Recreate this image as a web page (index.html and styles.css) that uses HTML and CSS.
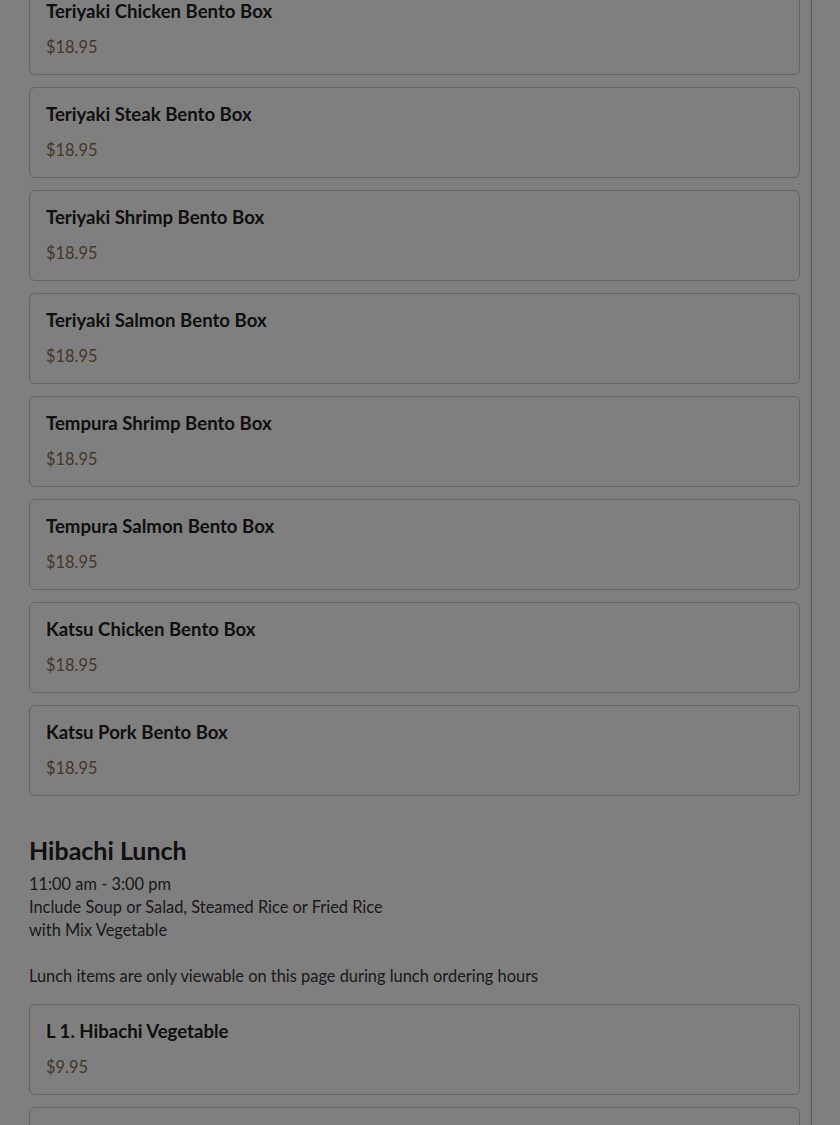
FILE: index.html
```html
<!DOCTYPE html>
<html lang="en">
<head>
<meta charset="utf-8">
<title>Menu</title>
<link rel="stylesheet" href="styles.css">
</head>
<body>
<div class="page">
  <main class="main">
    <section class="list first">
      <div class="card"><div class="name">Teriyaki Chicken Bento Box</div><div class="price">$18.95</div></div>
      <div class="card"><div class="name">Teriyaki Steak Bento Box</div><div class="price">$18.95</div></div>
      <div class="card"><div class="name">Teriyaki Shrimp Bento Box</div><div class="price">$18.95</div></div>
      <div class="card"><div class="name">Teriyaki Salmon Bento Box</div><div class="price">$18.95</div></div>
      <div class="card"><div class="name">Tempura Shrimp Bento Box</div><div class="price">$18.95</div></div>
      <div class="card"><div class="name">Tempura Salmon Bento Box</div><div class="price">$18.95</div></div>
      <div class="card"><div class="name">Katsu Chicken Bento Box</div><div class="price">$18.95</div></div>
      <div class="card"><div class="name">Katsu Pork Bento Box</div><div class="price">$18.95</div></div>
    </section>
    <section class="category">
      <h2 class="cat-title">Hibachi Lunch</h2>
      <div class="cat-desc">
        <p>11:00 am - 3:00 pm<br>Include Soup or Salad, Steamed Rice or Fried Rice<br>with Mix Vegetable</p>
        <p>Lunch items are only viewable on this page during lunch ordering hours</p>
      </div>
      <div class="list">
        <div class="card"><div class="name">L 1. Hibachi Vegetable</div><div class="price">$9.95</div></div>
        <div class="card"><div class="name">L 2. Hibachi Chicken</div><div class="price">$10.95</div></div>
      </div>
    </section>
  </main>
  <div class="rail"></div>
</div>
<div class="backdrop"></div>
</body>
</html>
```

FILE: styles.css
```css
html, body {
  margin: 0;
  padding: 0;
  background: #ffffff;
  font-family: "Lato", "Open Sans", "Liberation Sans", sans-serif;
  color: #222222;
  overflow: hidden;
}

.page {
  display: flex;
  min-height: 1125px;
}

.main {
  flex: 1;
  padding: 0 11px 0 29px;
}

.rail {
  width: 28px;
  border-left: 1px solid #b0b0b0;
  background: #ffffff;
}

.list {
  display: flex;
  flex-direction: column;
  gap: 12px;
}

.list.first {
  margin-top: -16px;
}

.card {
  border: 1px solid #c8c8c8;
  border-radius: 6px;
  padding: 16px 16px 18px;
  background: #ffffff;
}

.name {
  font-size: 18.6px;
  font-weight: 700;
  line-height: 20px;
  color: #202020;
}

.price {
  margin-top: 15px;
  font-size: 16.4px;
  line-height: 21px;
  color: #85714f;
}

.card .price {
  margin-bottom: -1px;
}

.category {
  margin-top: 39px;
}

.cat-title {
  margin: 0;
  font-size: 25px;
  line-height: 30px;
  font-weight: 700;
  color: #202020;
}

.cat-desc {
  margin: 7px 0 17px;
  font-size: 16.4px;
  line-height: 23px;
  color: #333333;
}

.cat-desc p {
  margin: 0;
}

.cat-desc p + p {
  margin-top: 23px;
}

.backdrop {
  position: fixed;
  inset: 0;
  background: rgba(0, 0, 0, 0.5);
}
```
